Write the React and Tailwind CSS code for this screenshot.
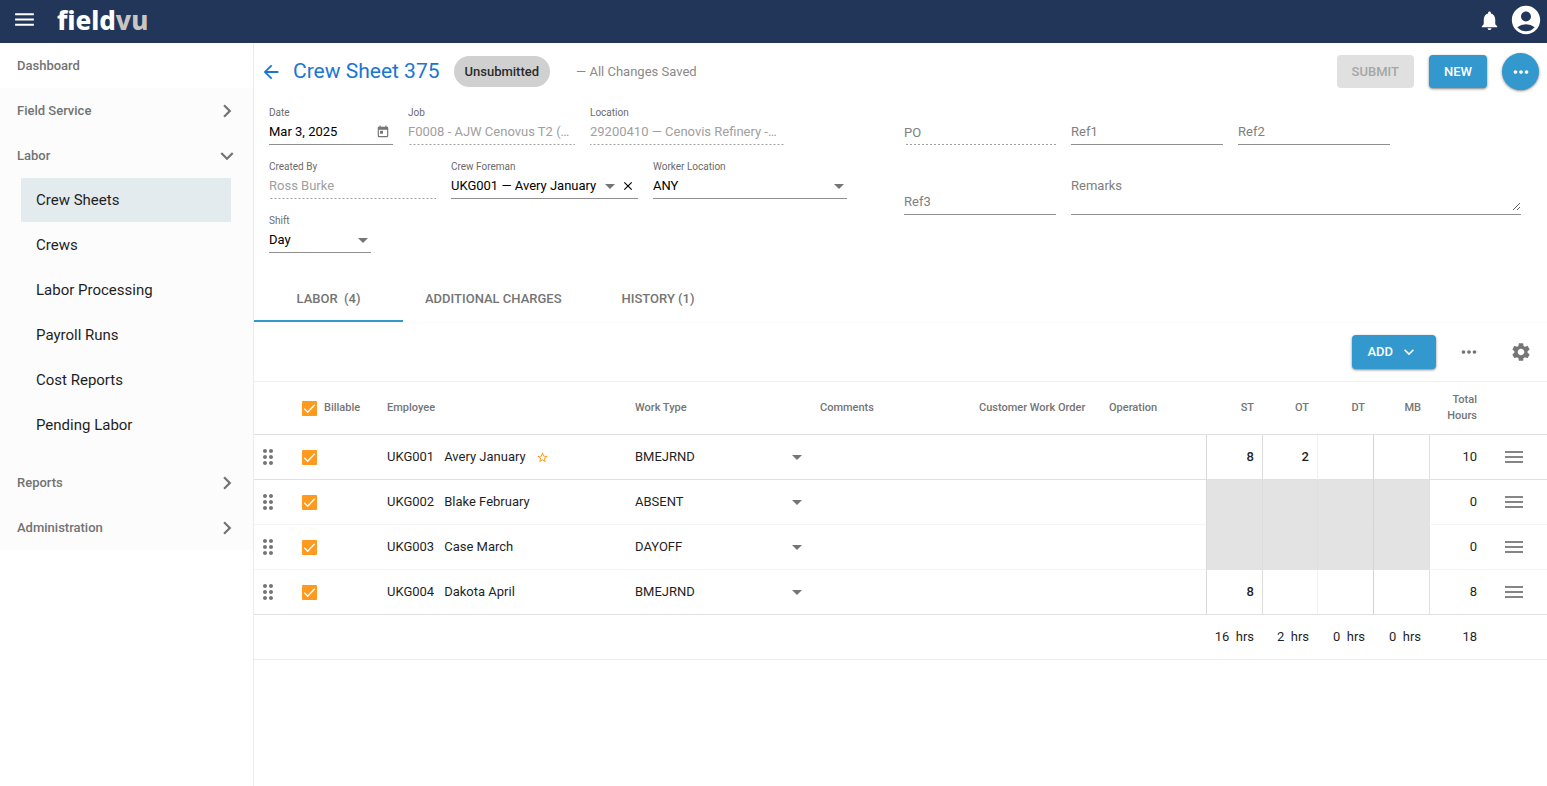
import React, { useState } from "react";
import {
  MdAccountCircle,
  MdArrowBack,
  MdArrowDropDown,
  MdChevronRight,
  MdClose,
  MdDragIndicator,
  MdExpandMore,
  MdMenu,
  MdMoreHoriz,
  MdNotifications,
  MdSettings,
  MdStarBorder,
  MdToday,
} from "react-icons/md";

const laborLinks = [
  "Crew Sheets",
  "Crews",
  "Labor Processing",
  "Payroll Runs",
  "Cost Reports",
  "Pending Labor",
];

const initialRows = [
  { id: "UKG001", name: "Avery January", foreman: true, type: "BMEJRND", st: "8", ot: "2", total: 10 },
  { id: "UKG002", name: "Blake February", type: "ABSENT", off: true, total: 0 },
  { id: "UKG003", name: "Case March", type: "DAYOFF", off: true, total: 0 },
  { id: "UKG004", name: "Dakota April", type: "BMEJRND", st: "8", total: 8 },
];

const hourColumns = [
  { key: "st", label: "ST", border: "border-l-[#d8d8d8]" },
  { key: "ot", label: "OT", border: "border-l-[#dcdcdc]" },
  { key: "dt", label: "DT", border: "border-l-[#f0f0f0]", offBorder: "border-l-[#dedede]" },
  { key: "mb", label: "MB", border: "border-l-[#d4d4d4]" },
];

const Header = () => (
  <header className="flex h-[43px] items-center bg-[#213658] px-3 text-white">
    <button aria-label="Menu" className="mt-[-4px]">
      <MdMenu size={25} />
    </button>
    <a
      href="#home"
      className="ml-5 mt-[-4px] font-['Noto_Sans'] text-[26px] leading-none font-extrabold"
    >
      field<span className="text-[#c9c5c2]">vu</span>
    </a>
    <div className="ml-auto flex items-center gap-2">
      <button aria-label="Notifications" className="mt-[-3px]">
        <MdNotifications size={23} />
      </button>
      <button aria-label="Account" className="mt-[-3px] -mr-2">
        <MdAccountCircle size={34} />
      </button>
    </div>
  </header>
);

const NavRow = ({ label, open, plain }) => (
  <button
    className={`flex h-[45px] w-full items-center justify-between pr-[13px] pl-[17px] text-left text-[13px] font-medium text-[#737373] ${
      plain ? "bg-white" : ""
    }`}
  >
    {label}
    {!plain && (
      <MdChevronRight size={26} className={open ? "rotate-90" : ""} />
    )}
  </button>
);

const Sidebar = () => (
  <nav className="w-[254px] shrink-0 border-r border-[#ececec]">
    <div className="bg-[#fcfcfc]">
      <NavRow label="Dashboard" plain />
      <NavRow label="Field Service" />
      <NavRow label="Labor" open />
      <ul className="flex flex-col gap-px pr-[22px] pb-[13px] pl-[21px]">
        {laborLinks.map((link, i) => (
          <li key={link}>
            <a
              href="#labor"
              className={`flex h-11 items-center pl-[15px] text-[15px] text-[#1f1f1f] ${
                i === 0 ? "bg-[#e3ebee]" : ""
              }`}
            >
              {link}
            </a>
          </li>
        ))}
      </ul>
      <NavRow label="Reports" />
      <NavRow label="Administration" />
    </div>
  </nav>
);

// Underlined control with a small label on top
const Field = ({ id, label, disabled, className = "", children }) => (
  <div
    className={`flex h-[38px] flex-col ${className} ${
      disabled
        ? "bg-[linear-gradient(to_right,#a0a0a0_50%,transparent_50%)] bg-[length:4px_1px] bg-bottom bg-repeat-x"
        : "border-b border-[#8f8f8f]"
    }`}
  >
    <label htmlFor={id} className="text-[10px] leading-3 text-[#6b6b6b]">
      {label}
    </label>
    <div className="flex flex-1 items-center text-[13px]">{children}</div>
  </div>
);

// Underlined control whose label sits where the text goes
const EmptyField = ({ id, label, disabled, className = "" }) => (
  <div
    className={`flex h-[38px] w-[152px] items-end pb-1 ${className} ${
      disabled
        ? "bg-[linear-gradient(to_right,#a0a0a0_50%,transparent_50%)] bg-[length:4px_1px] bg-bottom bg-repeat-x"
        : "border-b border-[#8f8f8f]"
    }`}
  >
    <label htmlFor={id} className="text-[13px] leading-4 text-[#808080]">
      {label}
    </label>
    <input id={id} disabled={disabled} className="min-w-0 flex-1 outline-none" />
  </div>
);

const Select = ({ id, value, label, className = "" }) => (
  <div className="grid w-full items-center">
    <select
      id={id}
      aria-label={label}
      defaultValue={value}
      className={`col-start-1 row-start-1 w-full appearance-none truncate bg-transparent outline-none ${className}`}
    >
      <option>{value}</option>
    </select>
    <MdArrowDropDown
      size={24}
      className="pointer-events-none col-start-1 row-start-1 -mr-1 justify-self-end text-[#757575]"
    />
  </div>
);

const CrewSheetForm = () => (
  <form className="grid grid-cols-2 gap-[18px] pt-[17px] pr-[26px] pl-[15px]">
    <div className="flex flex-col gap-4">
      <div className="flex gap-[15px]">
        <Field id="date" label="Date" className="w-[124px]">
          <input id="date" defaultValue="Mar 3, 2025" className="w-full min-w-0 outline-none" />
          <MdToday size={14} className="mr-[3px] shrink-0 text-[#757575]" />
        </Field>
        <Field id="job" label="Job" disabled className="w-[167px]">
          <input
            id="job"
            disabled
            value="F0008 - AJW Cenovus T2 (…"
            className="w-full text-[#a0a0a0]"
          />
        </Field>
        <Field id="location" label="Location" disabled className="w-[195px]">
          <input
            id="location"
            disabled
            value="29200410 — Cenovis Refinery -…"
            className="w-full text-[#a0a0a0]"
          />
        </Field>
      </div>
      <div className="flex gap-[15px]">
        <Field id="created" label="Created By" disabled className="w-[167px]">
          <input id="created" disabled value="Ross Burke" className="w-full text-[#a0a0a0]" />
        </Field>
        <Field id="foreman" label="Crew Foreman" className="w-[187px]">
          <Select id="foreman" value="UKG001 — Avery January" />
          <button type="button" aria-label="Clear foreman" className="px-[3px]">
            <MdClose size={14} />
          </button>
        </Field>
        <Field id="worker" label="Worker Location" className="w-[194px]">
          <Select id="worker" value="ANY" />
        </Field>
      </div>
      <Field id="shift" label="Shift" className="w-[102px]">
        <Select id="shift" value="Day" />
      </Field>
    </div>

    <div className="flex flex-col gap-4">
      <div className="flex gap-[15px]">
        <EmptyField id="po" label="PO" disabled />
        <EmptyField id="ref1" label="Ref1" />
        <EmptyField id="ref2" label="Ref2" />
      </div>
      <div className="flex items-end gap-[15px]">
        <EmptyField id="ref3" label="Ref3" />
        <div className="flex h-[54px] flex-1 items-stretch border-b border-[#8f8f8f] pt-[15px] pb-[3px]">
          <label htmlFor="remarks" className="text-[13px] leading-5 text-[#808080]">
            Remarks
          </label>
          <textarea id="remarks" className="min-w-0 flex-1 resize outline-none" />
        </div>
      </div>
    </div>
  </form>
);

const Checkbox = ({ label, checked, onChange }) => (
  <span className="grid size-[15px] place-items-center">
    <input
      type="checkbox"
      aria-label={label}
      checked={checked}
      onChange={onChange}
      className="peer col-start-1 row-start-1 size-[15px] appearance-none rounded-[1px] border-2 border-[#ff9a1f] checked:bg-[#ff9a1f]"
    />
    <svg
      viewBox="0 0 15 15"
      className="pointer-events-none invisible col-start-1 row-start-1 size-[15px] fill-none stroke-white peer-checked:visible"
      strokeWidth="1.3"
    >
      <path d="M2.3 7.8l3.4 3.4 7-7.4" />
    </svg>
  </span>
);

const LaborTable = () => {
  const [checked, setChecked] = useState(initialRows.map(() => true));
  const allChecked = checked.every(Boolean);

  const toggle = (index) =>
    setChecked(checked.map((value, i) => (i === index ? !value : value)));

  return (
    <table className="w-full table-fixed border-separate border-spacing-0 border-t border-[#f0f0f0] text-left text-[13px]">
      <colgroup>
        <col className="w-12" />
        <col className="w-[85px]" />
        <col className="w-[248px]" />
        <col className="w-[185px]" />
        <col />
        <col className="w-[130px]" />
        <col className="w-[97px]" />
        <col className="w-14" />
        <col className="w-[55px]" />
        <col className="w-14" />
        <col className="w-14" />
        <col className="w-14" />
        <col className="w-[62px]" />
      </colgroup>
      <thead>
        <tr className="h-[53px] text-[11px] text-[#757575] *:border-b *:border-[#e0e0e0] *:font-medium">
          <th />
          <th>
            <span className="flex items-center gap-[7px]">
              <Checkbox
                label="All billable"
                checked={allChecked}
                onChange={() => setChecked(checked.map(() => !allChecked))}
              />
              Billable
            </span>
          </th>
          <th>Employee</th>
          <th>Work Type</th>
          <th>Comments</th>
          <th>Customer Work Order</th>
          <th>Operation</th>
          {hourColumns.map((col) => (
            <th key={col.key} className="pr-2 text-right">
              {col.label}
            </th>
          ))}
          <th className="pr-2 text-right leading-4">
            Total
            <br />
            Hours
          </th>
          <th />
        </tr>
      </thead>
      <tbody>
        {initialRows.map((row, i) => (
          <tr
            key={row.id}
            className={`h-[45px] text-[#1f1f1f] *:border-b ${
              i === 0 || i === 3 ? "*:border-b-[#e0e0e0]" : "*:border-b-[#f5f5f5]"
            }`}
          >
            <td>
              <MdDragIndicator size={24} className="ml-[2px] text-[#757575]" />
            </td>
            <td>
              <Checkbox
                label={`${row.name} billable`}
                checked={checked[i]}
                onChange={() => toggle(i)}
              />
            </td>
            <td>
              <span className="flex items-center gap-[10px]">
                <span>{row.id}</span>
                <span>{row.name}</span>
                {row.foreman && <MdStarBorder size={13} className="text-[#ff9a1f]" />}
              </span>
            </td>
            <td className="pr-[15px]">
              <Select value={row.type} label={`${row.name} work type`} />
            </td>
            <td />
            <td />
            <td />
            {hourColumns.map((col) => (
              <td
                key={col.key}
                className={`border-l ${(row.off && col.offBorder) || col.border} ${
                  row.off ? "border-b-[#e3e3e3]! bg-[#e3e3e3]" : ""
                }`}
              >
                <input
                  aria-label={`${row.name} ${col.label}`}
                  defaultValue={row[col.key]}
                  disabled={row.off}
                  className="w-full pr-2 text-right font-medium outline-none"
                />
              </td>
            ))}
            <td className="border-l border-l-[#e0e0e0] pr-2 text-right">{row.total}</td>
            <td>
              <button aria-label={`${row.name} options`} className="ml-5 block">
                <svg viewBox="0 0 18 12" className="h-3 w-[18px] fill-[#858585]">
                  <path d="M0 0h18v2H0zM0 5h18v2H0zM0 10h18v2H0z" />
                </svg>
              </button>
            </td>
          </tr>
        ))}
      </tbody>
      <tfoot>
        <tr className="h-[45px] text-right whitespace-pre text-[#1f1f1f] *:border-b *:border-[#ececec] *:pr-2">
          <td colSpan={7} />
          <td>16  hrs</td>
          <td>2  hrs</td>
          <td>0  hrs</td>
          <td>0  hrs</td>
          <td>18</td>
          <td />
        </tr>
      </tfoot>
    </table>
  );
};

const App = () => {
  return (
    <div className="flex min-h-screen flex-col bg-white font-[Roboto,sans-serif]">
      <Header />
      <div className="flex flex-1">
        <Sidebar />
        <main className="min-w-0 flex-1">
          {/* Title bar */}
          <div className="flex items-center pt-[10px] pr-2 pl-[6px]">
            <button aria-label="Back" className="text-[#1976d2]">
              <MdArrowBack size={22} />
            </button>
            <h1 className="ml-[11px] text-[21px] text-[#1976d2]">Crew Sheet 375</h1>
            <span className="ml-[14px] rounded-full bg-[#d0d0d0] px-[11px] py-[5px] text-[13px] leading-[21px] font-medium text-[#2b2b2b]">
              Unsubmitted
            </span>
            <span className="ml-[26px] text-[13px] text-[#8a8a8a]">— All Changes Saved</span>
            <div className="ml-auto flex items-center gap-[15px] text-[13px] font-medium">
              <button disabled className="h-[33px] rounded-sm bg-[#e0e0e0] px-[15px] text-[#a6a6a6]">
                SUBMIT
              </button>
              <button className="h-[33px] rounded-sm bg-[#3398ce] px-[15px] text-white shadow-sm shadow-black/40">
                NEW
              </button>
              <button
                aria-label="More actions"
                className="flex size-[37px] items-center justify-center rounded-full bg-[#3398ce] text-white shadow-sm shadow-black/40"
              >
                <MdMoreHoriz size={22} />
              </button>
            </div>
          </div>

          <CrewSheetForm />

          {/* Tabs */}
          <div role="tablist" className="mt-6 flex border-b border-[#fafafa] text-[13px] font-medium text-[#757575]">
            <button
              role="tab"
              aria-selected="true"
              className="h-[45px] min-w-[149px] border-b-2 border-[#3398ce] px-[22px] whitespace-pre"
            >
              LABOR  (4)
            </button>
            <button
              role="tab"
              aria-selected="false"
              className="h-[45px] border-b-2 border-transparent px-[22px]"
            >
              ADDITIONAL CHARGES
            </button>
            <button
              role="tab"
              aria-selected="false"
              className="h-[45px] min-w-[149px] border-b-2 border-transparent px-[22px]"
            >
              HISTORY (1)
            </button>
          </div>

          <div className="flex h-[58px] items-center justify-end pr-[15px] text-[#757575]">
            <button className="flex h-[34px] items-center gap-[6px] rounded-sm bg-[#3398ce] pr-[17px] pl-[15px] text-[13px] font-medium text-white shadow-sm shadow-black/40">
              ADD
              <MdExpandMore size={20} />
            </button>
            <button aria-label="More" className="ml-[22px]">
              <MdMoreHoriz size={22} />
            </button>
            <button aria-label="Table settings" className="ml-[30px]">
              <MdSettings size={22} />
            </button>
          </div>

          <LaborTable />
        </main>
      </div>
    </div>
  );
};

export default App;
